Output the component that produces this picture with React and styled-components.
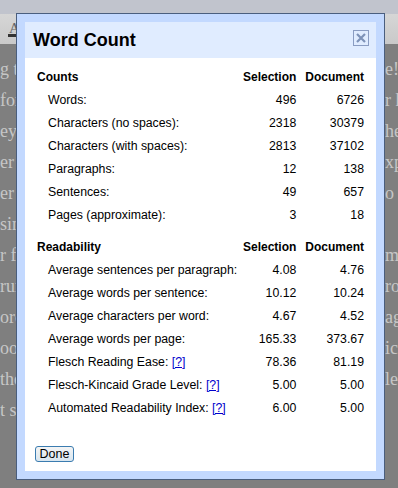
import React from "react";
import styled, { createGlobalStyle } from "styled-components";

const GlobalStyle = createGlobalStyle`
  html, body {
    margin: 0;
    padding: 0;
    background: #7f7f7f;
  }
  body {
    width: 398px;
    height: 488px;
    overflow: hidden;
    font-family: "Liberation Sans", Arial, sans-serif;
  }
`;

const Page = styled.div`
  position: relative;
  width: 398px;
  height: 488px;
  overflow: hidden;
`;

const TopStrip = styled.div`
  height: 14px;
  background: #c1c4cd;
`;

const Toolbar = styled.div`
  height: 30px;
  background: linear-gradient(#d6d6d6, #c9c9c9);
  display: flex;
  align-items: center;
  padding-left: 8px;
`;

const FontGlyph = styled.span`
  font-family: "Liberation Serif", serif;
  font-size: 15px;
  color: #666;
  line-height: 12px;
  padding: 0 1px;
  border-bottom: 3px solid #333;
`;

const Doc = styled.div`
  padding-top: 10px;
  font-family: "Liberation Serif", "Times New Roman", serif;
  font-size: 18px;
  color: #c6c6c6;
`;

const DocLine = styled.div`
  display: flex;
  justify-content: space-between;
  height: 31px;
  line-height: 31px;
  white-space: nowrap;
`;

const DocEdge = styled.span`
  width: ${(p) => p.w}px;
  overflow: hidden;
`;

const Dialog = styled.div`
  position: absolute;
  top: 13px;
  left: 16px;
  width: 369px;
  height: 467px;
  border: 1px solid #4a5e7e;
  background: #c3d9ff;
  padding: 8px;
  box-sizing: border-box;
  display: flex;
  flex-direction: column;
`;

const Inner = styled.div`
  flex: 1;
  min-width: 0;
  background: #fff;
  display: flex;
  flex-direction: column;
`;

const TitleBar = styled.div`
  height: 36px;
  flex-shrink: 0;
  background: #e0ecff;
  display: flex;
  justify-content: space-between;
  align-items: flex-start;
  padding: 0 7px 0 8px;
`;

const Title = styled.h1`
  margin: 0;
  font-size: 18px;
  font-weight: bold;
  color: #000;
  line-height: 36px;
`;

const CloseBox = styled.div`
  margin-top: 8px;
  width: 14px;
  height: 14px;
  border: 1px solid #8a9cc2;
  display: flex;
  align-items: center;
  justify-content: center;
`;

const Body = styled.div`
  flex: 1;
  padding: 8px 12px 9px 12px;
  display: flex;
  flex-direction: column;
  font-size: 12.3px;
  color: #000;
`;

const Section = styled.div`
  display: grid;
  grid-template-columns: minmax(0, 1fr) auto auto;
  column-gap: 9px;
  margin-bottom: ${(p) => p.gap || 0}px;
`;

const Cell = styled.div`
  height: 23px;
  line-height: 23px;
  white-space: nowrap;
  text-align: ${(p) => (p.num ? "right" : "left")};
  padding-left: ${(p) => (p.indent ? 11 : 0)}px;
  font-weight: ${(p) => (p.head ? "bold" : "normal")};
  font-size: ${(p) => (p.head ? "12px" : "inherit")};
`;

const Help = styled.a`
  color: #0000cc;
  text-decoration: underline;
`;

const Footer = styled.div`
  margin-top: auto;
`;

const DoneButton = styled.button`
  font-family: "Liberation Sans", Arial, sans-serif;
  font-size: 12.5px;
  height: 16px;
  width: 39px;
  padding: 0;
  line-height: 13px;
  border: 1px solid #3b7cb0;
  border-radius: 3px;
  background: linear-gradient(#f4f4f4, #d8e6f0);
  color: #000;
  margin-left: -2px;
`;

const counts = [
  ["Words:", "496", "6726"],
  ["Characters (no spaces):", "2318", "30379"],
  ["Characters (with spaces):", "2813", "37102"],
  ["Paragraphs:", "12", "138"],
  ["Sentences:", "49", "657"],
  ["Pages (approximate):", "3", "18"],
];

const readability = [
  ["Average sentences per paragraph:", "4.08", "4.76"],
  ["Average words per sentence:", "10.12", "10.24"],
  ["Average characters per word:", "4.67", "4.52"],
  ["Average words per page:", "165.33", "373.67"],
  ["Flesch Reading Ease:", "78.36", "81.19", true],
  ["Flesch-Kincaid Grade Level:", "5.00", "5.00", true],
  ["Automated Readability Index:", "6.00", "5.00", true],
];

// text of the document page showing at both sides of the dialog
const docLines = [
  ["g t", 'e!"'],
  ["for", "r h"],
  ["ey-", "he"],
  ["er l", "xpe"],
  ["er j", " o"],
  ["sing", ""],
  ["r fr", " m"],
  ["run", "ro"],
  ["orc", " ag"],
  ["oon", "ic."],
  ["the", "led"],
  ["t sa", ""],
];

function StatSection({ title, rows, gap }) {
  return (
    <Section gap={gap}>
      <Cell head>{title}</Cell>
      <Cell head num>Selection</Cell>
      <Cell head num>Document</Cell>
      {rows.map(([label, sel, doc, help]) => (
        <React.Fragment key={label}>
          <Cell indent>
            {label}
            {help && (
              <>
                {" "}
                <Help href="#">[?]</Help>
              </>
            )}
          </Cell>
          <Cell num>{sel}</Cell>
          <Cell num>{doc}</Cell>
        </React.Fragment>
      ))}
    </Section>
  );
}

export default function App() {
  return (
    <>
      <GlobalStyle />
      <Page>
        <TopStrip />
        <Toolbar>
          <FontGlyph>A</FontGlyph>
        </Toolbar>
        <Doc>
          {docLines.map(([l, r], i) => (
            <DocLine key={i}>
              <DocEdge w={16}>{l}</DocEdge>
              <DocEdge w={13}>{r}</DocEdge>
            </DocLine>
          ))}
        </Doc>
        <Dialog>
          <Inner>
            <TitleBar>
              <Title>Word Count</Title>
              <CloseBox>
                <svg width="12" height="12" viewBox="0 0 12 12">
                  <path d="M2 2 L10 10 M10 2 L2 10" stroke="#7d92b8" strokeWidth="2.2" />
                </svg>
              </CloseBox>
            </TitleBar>
            <Body>
              <StatSection title="Counts" rows={counts} gap={9} />
              <StatSection title="Readability" rows={readability} />
              <Footer>
                <DoneButton>Done</DoneButton>
              </Footer>
            </Body>
          </Inner>
        </Dialog>
      </Page>
    </>
  );
}
